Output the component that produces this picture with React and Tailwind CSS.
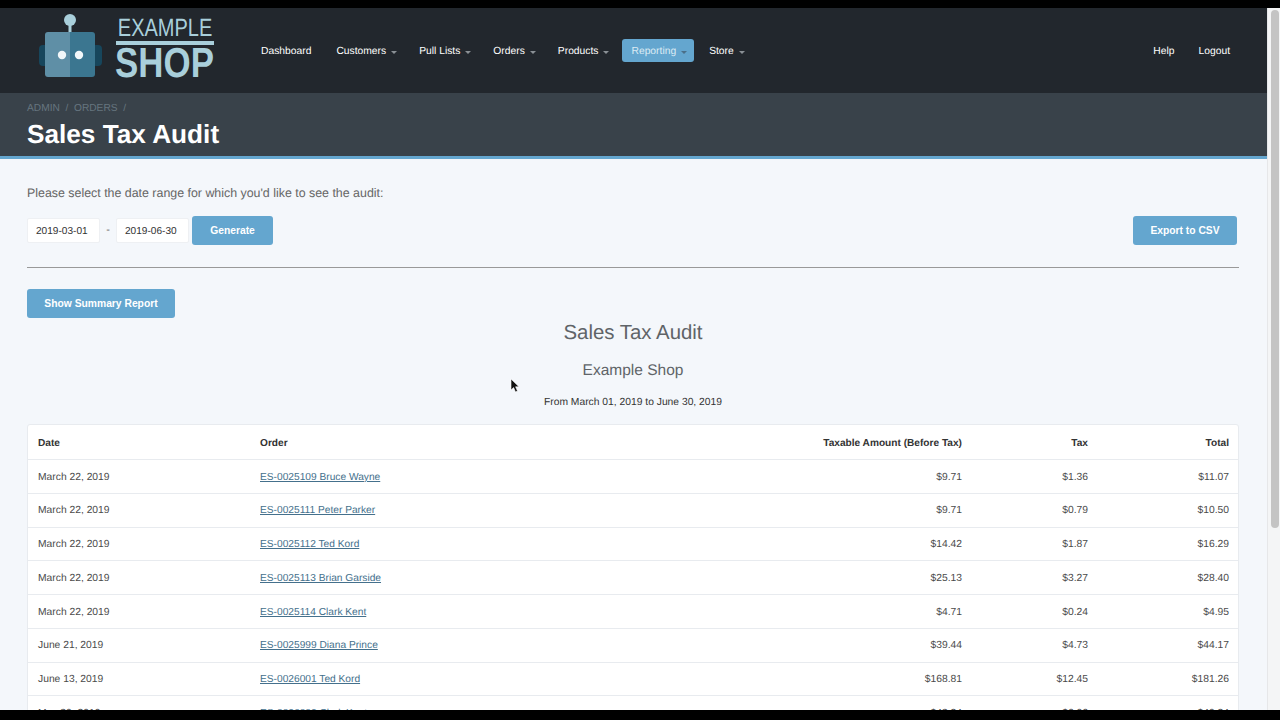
const navItems = [
  { label: "Customers" },
  { label: "Pull Lists" },
  { label: "Orders" },
  { label: "Products" },
  { label: "Reporting", active: true },
  { label: "Store" },
];

const rows = [
  ["March 22, 2019", "ES-0025109 Bruce Wayne", "$9.71", "$1.36", "$11.07"],
  ["March 22, 2019", "ES-0025111 Peter Parker", "$9.71", "$0.79", "$10.50"],
  ["March 22, 2019", "ES-0025112 Ted Kord", "$14.42", "$1.87", "$16.29"],
  ["March 22, 2019", "ES-0025113 Brian Garside", "$25.13", "$3.27", "$28.40"],
  ["March 22, 2019", "ES-0025114 Clark Kent", "$4.71", "$0.24", "$4.95"],
  ["June 21, 2019", "ES-0025999 Diana Prince", "$39.44", "$4.73", "$44.17"],
  ["June 13, 2019", "ES-0026001 Ted Kord", "$168.81", "$12.45", "$181.26"],
  ["May 30, 2019", "ES-0026003 Clark Kent", "$43.24", "$6.06", "$49.24"],
];

const Logo = () => (
  <div className="flex items-center w-[252px] shrink-0 h-full pl-[39px]">
    <svg width="63" height="66" viewBox="0 0 63 66" className="shrink-0 mt-[-9px]">
      <rect x="0" y="32" width="10" height="21" rx="4" fill="#17465c" />
      <rect x="53" y="32" width="10" height="21" rx="4" fill="#17465c" />
      <rect x="29.5" y="7" width="3" height="13" fill="#a9cfdb" />
      <circle cx="31" cy="7" r="6" fill="#a9cfdb" />
      <path d="M31 19H9a3 3 0 0 0-3 3v39a3 3 0 0 0 3 3h22z" fill="#5f8fa6" />
      <path d="M31 19h22a3 3 0 0 1 3 3v39a3 3 0 0 1-3 3h-22z" fill="#3b7690" />
      <circle cx="23" cy="42" r="4.2" fill="#f2f7f9" />
      <circle cx="40" cy="42" r="4.2" fill="#f2f7f9" />
    </svg>
    <div className="ml-[14px] mt-[-4px] w-[98px] shrink-0 flex flex-col items-center text-[#a9cfdb]">
      <span className="text-[25px] leading-[24px] scale-x-[0.8]">EXAMPLE</span>
      <span className="w-full h-[4px] bg-[#a9cfdb] mt-[1px]" />
      <span className="text-[42px] leading-[36px] font-bold scale-x-[0.83]">SHOP</span>
    </div>
  </div>
);

const NavItem = ({ label, active }) => (
  <a
    className={`flex items-center h-[23px] pl-[9px] pr-[7px] pt-[3px] rounded-[3px] ${
      active ? "bg-[#64a6cf] text-[#dcebf4]" : "text-white"
    }`}
  >
    {label}
    <span
      className={`ml-[5px] mt-[1px] border-x-[3px] border-x-transparent border-t-[3px] ${
        active ? "border-t-[#4b6f88]" : "border-t-[#8a9095]"
      }`}
    />
  </a>
);

const Button = ({ children, className }) => (
  <button className={`h-[29px] bg-[#64a6cf] text-white text-[10.3px] font-bold rounded-[3px] ${className}`}>
    {children}
  </button>
);

const DateInput = ({ value }) => (
  <div className="w-[73px] h-[25px] bg-white border border-[#eef0f3] rounded-[2px] flex items-center pl-[8px] pt-[2px] text-[10.1px] text-[#333]">
    {value}
  </div>
);

export default function App() {
  return (
    <div className="relative w-[1280px] h-[720px] overflow-hidden flex flex-col bg-black font-['Liberation_Sans',Arial,sans-serif] [text-rendering:geometricPrecision]">
      <div className="h-2 shrink-0" />
      <div className="flex flex-1 min-h-0">
        <div className="w-[1267px] shrink-0 bg-[#f4f7fb] overflow-hidden">
          <header className="h-[85px] bg-[#22272d] flex items-center text-[10.3px]">
            <Logo />
            <nav className="flex items-center gap-[6px] mt-[-1px]">
              <a className="pl-[9px] pr-[9px] pt-[3px] text-white mr-[1px]">Dashboard</a>
              {navItems.map((item) => (
                <NavItem key={item.label} {...item} />
              ))}
            </nav>
            <div className="ml-auto flex gap-[24px] pr-[37px] mt-[2px] text-white">
              <a>Help</a>
              <a>Logout</a>
            </div>
          </header>

          <div className="h-[66px] bg-[#39424a] border-b-[3px] border-[#64a6cf] px-[27px] pt-[9px]">
            <div className="text-[10.2px] leading-[14px] text-[#66757f]">ADMIN&nbsp; /&nbsp; ORDERS&nbsp; /</div>
            <h1 className="mt-[1px] text-[26.2px] leading-[34px] font-bold text-white">Sales Tax Audit</h1>
          </div>

          <main className="pl-[27px] pr-[28px] pt-[27px]">
            <p className="text-[12.4px] leading-[15px] text-[#666]">Please select the date range for which you'd like to see the audit:</p>

            <div className="flex items-center mt-[15px]">
              <DateInput value="2019-03-01" />
              <span className="w-[16px] text-center text-[11px] text-[#666]">-</span>
              <DateInput value="2019-06-30" />
              <Button className="w-[81px] ml-[3px]">Generate</Button>
              <Button className="w-[104px] ml-auto mr-[2px]">Export to CSV</Button>
            </div>

            <hr className="mt-[22px] border-t border-[#999]" />

            <Button className="w-[148px] mt-[21px]">Show Summary Report</Button>

            <div className="text-center">
              <h2 className="mt-[3px] text-[20.4px] leading-[24px] text-[#5f6468]">Sales Tax Audit</h2>
              <h3 className="mt-[17px] text-[15.5px] leading-[18px] text-[#5f6468]">Example Shop</h3>
              <p className="mt-[16px] text-[10.3px] leading-[14px] text-[#333]">From March 01, 2019 to June 30, 2019</p>
            </div>

            <div className="mt-[14px] bg-white border border-[#e8ebef] rounded-t-[3px]">
              <div className="grid grid-cols-[221px_1fr_180px_126px_141px] h-[34px] items-center pr-[9px] pt-[4px] text-[10.15px] font-bold text-[#333]">
                <span className="pl-[10px]">Date</span>
                <span className="pl-[11px]">Order</span>
                <span className="text-right">Taxable Amount (Before Tax)</span>
                <span className="text-right">Tax</span>
                <span className="text-right">Total</span>
              </div>
              {rows.map((r) => (
                <div
                  key={r[1]}
                  className="grid grid-cols-[221px_1fr_180px_126px_141px] h-[33.75px] items-center pr-[9px] pt-[2px] border-t border-[#e8ebef] text-[10.3px] text-[#4a4a4a]"
                >
                  <span className="pl-[10px]">{r[0]}</span>
                  <a className="pl-[11px] text-[10.2px] text-[#44708c] underline">{r[1]}</a>
                  <span className="text-right">{r[2]}</span>
                  <span className="text-right">{r[3]}</span>
                  <span className="text-right">{r[4]}</span>
                </div>
              ))}
            </div>
          </main>
        </div>

        <div className="flex-1 bg-[#f4f5f6] border-l border-[#e6e7e9] pt-[2px] pl-[3px]">
          <div className="w-[8px] h-[518px] bg-[#c4c4c4] rounded-[4px]" />
        </div>
      </div>
      <div className="h-[10px] shrink-0" />

      <svg width="10" height="15" viewBox="0 0 10 15" className="absolute left-[510px] top-[378px]">
        <path d="M1 1v11l2.6-2.4L5.5 14l2-1-1.9-4.2H9z" fill="#111" stroke="#fff" strokeWidth="0.6" />
      </svg>
    </div>
  );
}
